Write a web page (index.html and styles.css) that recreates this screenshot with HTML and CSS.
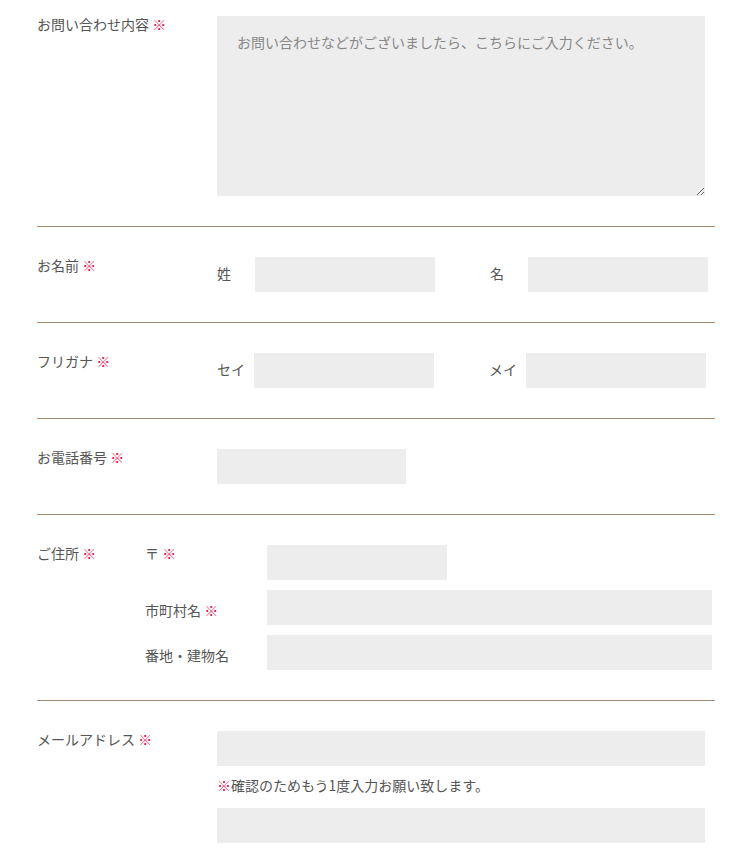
FILE: index.html
```html
<!DOCTYPE html>
<html lang="ja">
<head>
    <meta charset="UTF-8">
    <meta name="viewport" content="width=device-width, initial-scale=1.0">
    <title>お問い合わせ</title>
    <link rel="stylesheet" href="styles.css">
</head>
<body>

<form class="contact-form">

    <!-- お問い合わせ内容 -->
    <div class="form-row first-row">
        <div class="form-label">お問い合わせ内容 <span class="req">※</span></div>
        <div class="form-field">
            <textarea class="message" placeholder="お問い合わせなどがございましたら、こちらにご入力ください。"></textarea>
        </div>
    </div>

    <!-- お名前 -->
    <div class="form-row">
        <div class="form-label">お名前 <span class="req">※</span></div>
        <div class="form-field name-field">
            <div class="name-group">
                <span class="name-label">姓</span>
                <input type="text" class="text-input name-input">
            </div>
            <div class="name-group second">
                <span class="name-label">名</span>
                <input type="text" class="text-input name-input">
            </div>
        </div>
    </div>

    <!-- フリガナ -->
    <div class="form-row">
        <div class="form-label">フリガナ <span class="req">※</span></div>
        <div class="form-field name-field">
            <div class="name-group">
                <span class="name-label kana">セイ</span>
                <input type="text" class="text-input name-input">
            </div>
            <div class="name-group second">
                <span class="name-label kana">メイ</span>
                <input type="text" class="text-input name-input">
            </div>
        </div>
    </div>

    <!-- お電話番号 -->
    <div class="form-row">
        <div class="form-label">お電話番号 <span class="req">※</span></div>
        <div class="form-field">
            <input type="tel" class="text-input tel-input">
        </div>
    </div>

    <!-- ご住所 -->
    <div class="form-row">
        <div class="form-label address-label">ご住所 <span class="req">※</span></div>
        <div class="form-field address-field">
            <div class="address-row">
                <span class="sub-label">〒 <span class="req">※</span></span>
                <input type="text" class="text-input zip-input">
            </div>
            <div class="address-row">
                <span class="sub-label lower">市町村名 <span class="req">※</span></span>
                <input type="text" class="text-input address-input">
            </div>
            <div class="address-row">
                <span class="sub-label lower">番地・建物名</span>
                <input type="text" class="text-input address-input">
            </div>
        </div>
    </div>

    <!-- メールアドレス -->
    <div class="form-row last-row">
        <div class="form-label">メールアドレス <span class="req">※</span></div>
        <div class="form-field">
            <input type="email" class="text-input wide-input">
            <p class="note"><span class="req">※</span>確認のためもう1度入力お願い致します。</p>
            <input type="email" class="text-input wide-input">
        </div>
    </div>

</form>

</body>
</html>
```

FILE: styles.css
```css
/* Reset */
* {
    margin: 0;
    padding: 0;
    box-sizing: border-box;
}

body {
    font-family: "Noto Sans CJK JP", "Noto Sans", sans-serif;
    font-size: 14px;
    line-height: 20px;
    color: #555;
    background-color: #fff;
}

/* Form layout */
.contact-form {
    width: 678px;
    margin-left: 37px;
}

.form-row {
    display: flex;
    padding: 30px 0;
    border-bottom: 1px solid #a68b74;
}

.first-row {
    padding-top: 16px;
}

.last-row {
    border-bottom: none;
}

.form-label {
    width: 180px;
    flex-shrink: 0;
    line-height: 17px;
}

.req {
    color: #dc0f4e;
}

.form-field {
    flex: 1;
}

/* Inputs */
.text-input,
.message {
    display: block;
    height: 35px;
    border: none;
    background-color: #ededed;
    font-family: inherit;
    font-size: 14px;
    color: #555;
    padding: 0 10px;
}

.message {
    width: 488px;
    height: 180px;
    padding: 16px 20px;
    line-height: 20px;
}

.message::placeholder {
    color: #888;
}

/* Name */
.name-field {
    display: flex;
}

.name-group {
    display: flex;
    align-items: center;
}

.name-group.second {
    margin-left: 55px;
}

.name-label {
    width: 38px;
    margin-bottom: 3px;
}

.name-label.kana {
    width: 37px;
}

.name-input {
    width: 180px;
}

.tel-input {
    width: 189px;
}

/* Address */
.address-label {
    width: 108px;
}

.address-field {
    display: flex;
    flex-direction: column;
    gap: 10px;
}

.address-row {
    display: flex;
}

.sub-label {
    width: 122px;
    flex-shrink: 0;
    line-height: 17px;
}

.sub-label.lower {
    padding-top: 12px;
}

.zip-input {
    width: 180px;
}

.address-input {
    width: 445px;
}

/* Email */
.wide-input {
    width: 488px;
}

.note {
    margin: 9px 0 13px;
}
```
